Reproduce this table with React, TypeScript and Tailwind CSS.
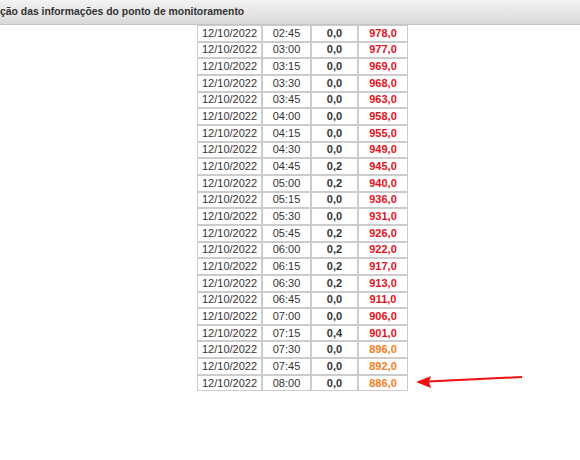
const rows: [string, string, string, "r" | "o"][] = [
  ["02:45", "0,0", "978,0", "r"],
  ["03:00", "0,0", "977,0", "r"],
  ["03:15", "0,0", "969,0", "r"],
  ["03:30", "0,0", "968,0", "r"],
  ["03:45", "0,0", "963,0", "r"],
  ["04:00", "0,0", "958,0", "r"],
  ["04:15", "0,0", "955,0", "r"],
  ["04:30", "0,0", "949,0", "r"],
  ["04:45", "0,2", "945,0", "r"],
  ["05:00", "0,2", "940,0", "r"],
  ["05:15", "0,0", "936,0", "r"],
  ["05:30", "0,0", "931,0", "r"],
  ["05:45", "0,2", "926,0", "r"],
  ["06:00", "0,2", "922,0", "r"],
  ["06:15", "0,2", "917,0", "r"],
  ["06:30", "0,2", "913,0", "r"],
  ["06:45", "0,0", "911,0", "r"],
  ["07:00", "0,0", "906,0", "r"],
  ["07:15", "0,4", "901,0", "r"],
  ["07:30", "0,0", "896,0", "o"],
  ["07:45", "0,0", "892,0", "o"],
  ["08:00", "0,0", "886,0", "o"],
];

export default function App() {
  return (
    <div className="w-[580px] h-[460px] bg-white overflow-hidden relative" style={{ fontFamily: '"Liberation Sans", Arial, sans-serif' }}>
      <div className="h-[25px] bg-gradient-to-b from-[#f3f3f3] to-[#d9d9d9] border-b border-[#c4c4c4] flex items-center text-[10.4px] font-bold text-[#333] whitespace-nowrap">
        ção das informações do ponto de monitoramento
      </div>
      <table className="ml-[197px] border-separate border-spacing-0 text-[11px] text-[#333]">
        <tbody>
          {rows.map(([t, v, n, c]) => (
            <tr key={t} className="h-[16.67px]">
              <td className="w-[65px] border border-[#ccc] text-center leading-none p-0">12/10/2022</td>
              <td className="w-[49px] border border-[#ccc] text-center leading-none p-0">{t}</td>
              <td className="w-[47px] border border-[#ccc] text-center leading-none p-0 font-bold">{v}</td>
              <td className={`w-[50px] border border-[#ccc] text-center leading-none p-0 font-bold ${c === "r" ? "text-[#e8101a]" : "text-[#f57f20]"}`}>{n}</td>
            </tr>
          ))}
        </tbody>
      </table>
      <svg className="absolute left-0 top-0" width="580" height="460">
        <line x1="522" y1="377" x2="428" y2="381.6" stroke="#f01010" strokeWidth="2" />
        <polygon points="416,382 431,376 429,382 431,388" fill="#f01010" />
      </svg>
    </div>
  );
}
